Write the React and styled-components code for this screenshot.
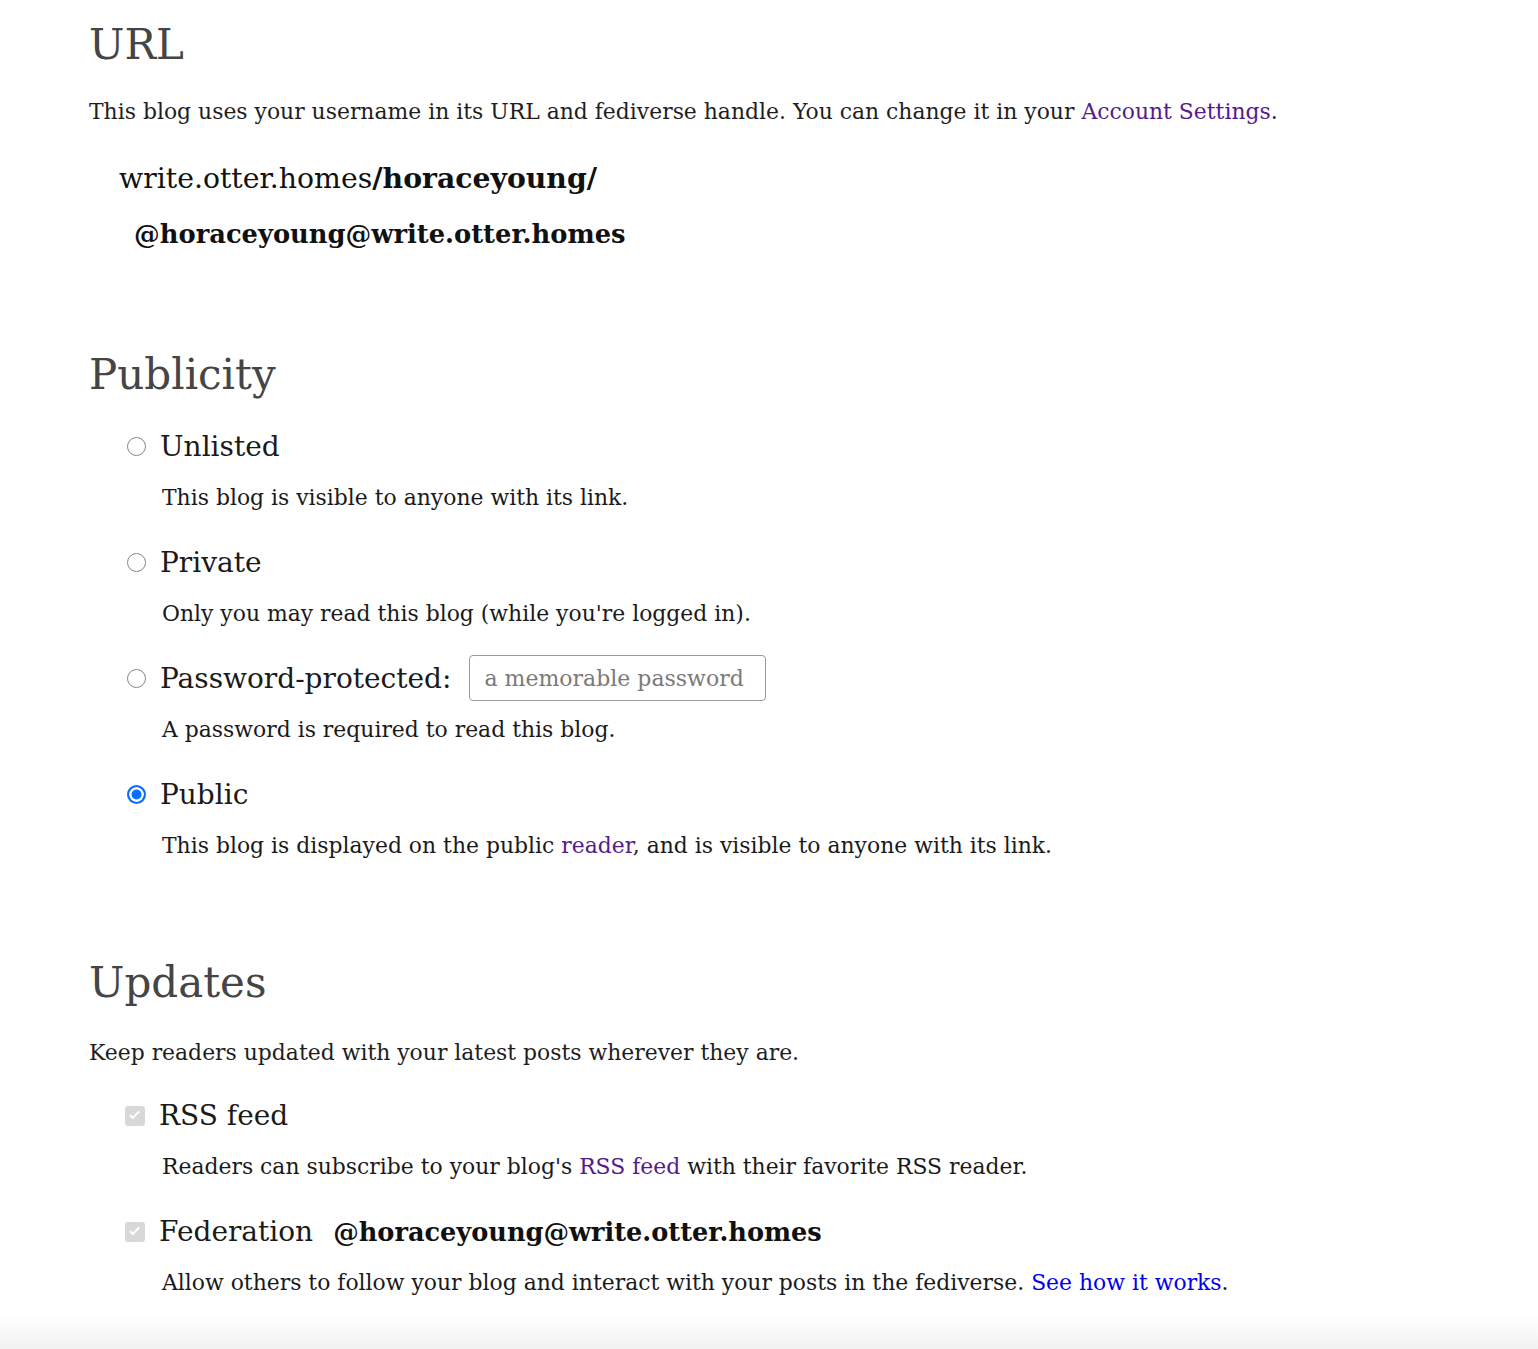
import React from "react"
import styled, { createGlobalStyle } from "styled-components"

const GlobalStyle = createGlobalStyle`
  *, *::before, *::after {
    box-sizing: border-box;
  }
  body {
    margin: 0;
    background: #fff;
    color: #1e1e1e;
    font-family: "DejaVu Serif", "Liberation Serif", serif;
  }
`

const Page = styled.main`
  padding: 19px 89px 0;
`

const Section = styled.section`
  & + & {
    margin-top: 95px;
  }
`

const Heading = styled.h2`
  margin: 0;
  font-size: 42px;
  line-height: 52px;
  font-weight: normal;
  color: #454545;
`

const Para = styled.p`
  margin: ${({ gap }) => gap || 25}px 0 0;
  font-size: 21.9px;
  line-height: 32px;
`

const Link = styled.a`
  color: ${({ visited }) => (visited ? "#551a8b" : "#0000ee")};
  text-decoration: none;
`

const Address = styled.div`
  margin: ${({ top }) => top}px 0 0 ${({ indent }) => indent}px;
  font-size: ${({ size }) => size}px;
  line-height: 40px;
  color: #111;
`

const Strong = styled.strong`
  font-weight: bold;
  color: #111;
`

const Option = styled.div`
  margin-left: 38px;
  margin-top: ${({ top }) => top ?? 28.5}px;
`

const OptionRow = styled.label`
  display: flex;
  align-items: center;
  height: 40px;
  gap: 14px;
  font-size: 28px;
  color: #1a1a1a;
  margin-left: ${({ box }) => (box ? -2 : 0)}px;
`

const Radio = styled.input.attrs({ type: "radio", name: "visibility" })`
  appearance: none;
  margin: 0;
  flex: none;
  width: 19px;
  height: 19px;
  border-radius: 50%;
  border: 1.5px solid #858585;
  background: #fff;

  &:checked {
    border: 2px solid #0b6cff;
    background: #0b6cff;
    box-shadow: inset 0 0 0 2.5px #fff;
  }
`

const Check = styled.input.attrs({ type: "checkbox" })`
  appearance: none;
  position: relative;
  margin: 0;
  flex: none;
  width: 20px;
  height: 20px;
  border-radius: 3px;
  background: #d8d8d8;

  &::after {
    content: "";
    position: absolute;
    left: 7px;
    top: 3px;
    width: 5px;
    height: 10px;
    border: solid #fff;
    border-width: 0 2.5px 2.5px 0;
    transform: rotate(45deg);
  }
`

const PasswordInput = styled.input`
  margin-left: 4px;
  width: 297px;
  height: 46px;
  padding: 0 14px;
  border: 1.5px solid #9a9a9a;
  border-radius: 4px;
  font-family: inherit;
  font-size: 22px;
  color: #333;

  &::placeholder {
    color: #7a7a7a;
  }
`

const Desc = styled.p`
  margin: 15.5px 0 0 35px;
  font-size: 21.9px;
  line-height: 32px;
  color: #1a1a1a;
`

const Handle = styled.strong`
  margin-left: 6px;
  font-size: 25.6px;
  font-weight: bold;
  color: #111;
`

const Footer = styled.div`
  margin-top: 16px;
  height: 36px;
  background: linear-gradient(to bottom, #fff, #f1f1f1);
`

const visibility = [
  { id: "unlisted", label: "Unlisted", desc: "This blog is visible to anyone with its link." },
  { id: "private", label: "Private", desc: "Only you may read this blog (while you're logged in)." },
  { id: "password", label: "Password-protected:", desc: "A password is required to read this blog." },
  { id: "public", label: "Public", checked: true },
]

const App = () => {
  return (
    <>
      <GlobalStyle />
      <Page>
        <Section>
          <Heading>URL</Heading>
          <Para>
            This blog uses your username in its URL and fediverse handle. You can change it in your{" "}
            <Link visited href="#">Account Settings</Link>.
          </Para>
          <Address top={30} indent={30} size={28.3}>
            write.otter.homes<Strong>/horaceyoung/</Strong>
          </Address>
          <Address top={15} indent={45} size={25.75}>
            <Strong>@horaceyoung@write.otter.homes</Strong>
          </Address>
        </Section>

        <Section>
          <Heading>Publicity</Heading>
          {visibility.map((v, i) => (
            <Option key={v.id} top={i === 0 ? 25 : undefined}>
              <OptionRow>
                <Radio defaultChecked={v.checked} value={v.id} />
                {v.label}
                {v.id === "password" && <PasswordInput type="password" placeholder="a memorable password" />}
              </OptionRow>
              <Desc>
                {v.desc || (
                  <>
                    This blog is displayed on the public <Link visited href="#">reader</Link>, and is visible to
                    anyone with its link.
                  </>
                )}
              </Desc>
            </Option>
          ))}
        </Section>

        <Section>
          <Heading>Updates</Heading>
          <Para gap={28}>Keep readers updated with your latest posts wherever they are.</Para>
          <Option top={27}>
            <OptionRow box>
              <Check defaultChecked disabled />
              RSS feed
            </OptionRow>
            <Desc>
              Readers can subscribe to your blog's <Link visited href="#">RSS feed</Link> with their favorite RSS
              reader.
            </Desc>
          </Option>
          <Option>
            <OptionRow box>
              <Check defaultChecked disabled />
              Federation
              <Handle>@horaceyoung@write.otter.homes</Handle>
            </OptionRow>
            <Desc>
              Allow others to follow your blog and interact with your posts in the fediverse.{" "}
              <Link href="#">See how it works</Link>.
            </Desc>
          </Option>
        </Section>
      </Page>
      <Footer />
    </>
  )
}

export default App
